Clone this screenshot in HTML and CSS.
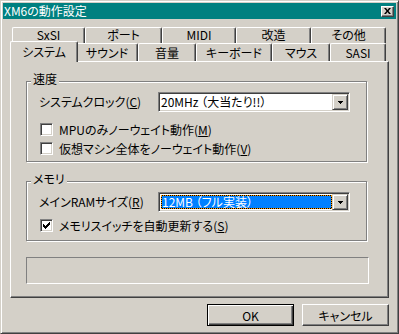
FILE: index.html
```html
<!DOCTYPE html>
<html lang="ja">
<head>
  <meta charset="UTF-8" />
  <title>XM6の動作設定</title>
  <link rel="stylesheet" href="styles.css">
</head>
<body>
  <div class="window">
    <div class="titlebar">
      <span class="title">XM6の動作設定</span>
      <span class="close-btn">
        <svg width="7" height="6" viewBox="0 0 7 6"><path d="M0 0h2l1.5 2L5 0h2L4.5 3 7 6H5L3.5 4 2 6H0l2.5-3z" fill="#000"/></svg>
      </span>
    </div>

    <div class="client">
      <div class="tab-row back">
        <div class="tab">SxSI</div>
        <div class="tab">ポート</div>
        <div class="tab">MIDI</div>
        <div class="tab">改造</div>
        <div class="tab">その他</div>
      </div>
      <div class="tab-row front">
        <div class="tab selected">システム</div>
        <div class="tab">サウンド</div>
        <div class="tab">音量</div>
        <div class="tab">キーボード</div>
        <div class="tab">マウス</div>
        <div class="tab">SASI</div>
      </div>

      <div class="panel">
        <div class="group group-speed">
          <div class="group-title">速度</div>
          <div class="field-row">
            <span class="field-label">システムクロック(<u>C</u>)</span>
            <div class="combo">
              <span class="combo-value">20MHz （大当たり!!）</span>
              <span class="combo-btn">
                <svg width="5" height="3" viewBox="0 0 5 3" shape-rendering="crispEdges"><path d="M0 0h5v1H0zM1 1h3v1H1zM2 2h1v1H2z" fill="#000"/></svg>
              </span>
            </div>
          </div>
          <div class="check-row first">
            <span class="checkbox"></span>
            <span>MPUのみノーウェイト動作(<u>M</u>)</span>
          </div>
          <div class="check-row second">
            <span class="checkbox"></span>
            <span>仮想マシン全体をノーウェイト動作(<u>V</u>)</span>
          </div>
        </div>

        <div class="group group-memory">
          <div class="group-title">メモリ</div>
          <div class="field-row">
            <span class="field-label">メインRAMサイズ(<u>R</u>)</span>
            <div class="combo">
              <span class="combo-value selected">12MB （フル実装）</span>
              <span class="combo-btn">
                <svg width="5" height="3" viewBox="0 0 5 3" shape-rendering="crispEdges"><path d="M0 0h5v1H0zM1 1h3v1H1zM2 2h1v1H2z" fill="#000"/></svg>
              </span>
            </div>
          </div>
          <div class="check-row memory">
            <span class="checkbox">
              <svg width="7" height="7" viewBox="0 0 7 7" shape-rendering="crispEdges"><path d="M6 0h1v3H6zM5 1h1v3H5zM4 2h1v3H4zM3 3h1v3H3zM2 4h1v3H2zM1 3h1v3H1zM0 2h1v3H0z" fill="#000"/></svg>
            </span>
            <span>メモリスイッチを自動更新する(<u>S</u>)</span>
          </div>
        </div>

        <div class="status-box"></div>
      </div>

      <div class="buttons">
        <button class="btn default">OK</button>
        <button class="btn">キャンセル</button>
      </div>
    </div>
  </div>
</body>
</html>
```

FILE: styles.css
```css
body {
  margin: 0;
  background: #d4d0c8;
  font-family: "Noto Sans CJK JP", sans-serif;
  font-size: 12px;
  font-feature-settings: "palt";
  color: #000;
}
.window {
  width: 399px;
  height: 334px;
  box-sizing: border-box;
  border: 1px solid;
  border-color: #d4d0c8 #404040 #404040 #d4d0c8;
  box-shadow: inset 1px 1px #fff, inset -1px -1px #808080;
  padding: 2px;
}
.titlebar {
  height: 16px;
  background: #008080;
  color: #fff;
  display: flex;
  align-items: center;
  justify-content: space-between;
  padding: 0 2px 0 1px;
  line-height: 16px;
}
.close-btn {
  width: 13px;
  height: 11px;
  box-sizing: border-box;
  background: #d4d0c8;
  border: 1px solid;
  border-color: #fff #404040 #404040 #fff;
  box-shadow: inset -1px -1px #808080;
  display: flex;
  align-items: center;
  justify-content: center;
}
.client {
  padding: 8px 7px 0 7px;
}
.tab-row {
  display: flex;
  padding-left: 2px;
}
.tab-row.back {
  height: 16px;
}
.tab-row.front {
  height: 18px;
}
.tab {
  box-sizing: border-box;
  height: 100%;
  background: #d4d0c8;
  border-top: 1px solid #fff;
  border-left: 1px solid #fff;
  border-right: 1px solid #404040;
  border-radius: 2px 2px 0 0;
  box-shadow: inset -1px 0 #808080;
  text-align: center;
}
.back .tab {
  line-height: 13px;
}
.front .tab {
  line-height: 17px;
}
.back .tab:nth-child(1) { width: 73px; }
.back .tab:nth-child(2) { width: 77px; }
.back .tab:nth-child(3) { width: 74px; }
.back .tab:nth-child(4) { width: 75px; }
.back .tab:nth-child(5) { width: 75px; }
.front .tab:nth-child(1) { width: 64px; }
.front .tab:nth-child(2) { width: 62px; }
.front .tab:nth-child(3) { width: 58px; }
.front .tab:nth-child(4) { width: 76px; }
.front .tab:nth-child(5) { width: 58px; }
.front .tab:nth-child(6) { width: 56px; }
.front .tab.selected {
  width: 68px;
  height: 21px;
  margin: -2px -2px 0 -2px;
  line-height: 20px;
  position: relative;
  z-index: 1;
}
.panel {
  box-sizing: border-box;
  height: 237px;
  border: 1px solid;
  border-color: #fff #404040 #404040 #fff;
  box-shadow: inset -1px -1px #808080;
  padding: 19px 0 0 15px;
}
.group {
  width: 341px;
  box-sizing: border-box;
  border: 1px solid #808080;
  box-shadow: inset 1px 1px #fff, 1px 1px #fff;
  padding: 0 0 0 12px;
}
.group-speed {
  height: 81px;
}
.group-memory {
  height: 60px;
  margin-top: 19px;
}
.group-title {
  width: fit-content;
  height: 14px;
  line-height: 14px;
  margin: -10px 0 0 -8px;
  padding: 0 2px;
  background: #d4d0c8;
}
.field-row {
  display: flex;
  align-items: center;
  height: 20px;
  margin-top: 6px;
}
.field-label {
  width: 119px;
  line-height: 16px;
}
.combo {
  display: flex;
  width: 192px;
  height: 20px;
  box-sizing: border-box;
  border: 1px solid;
  border-color: #808080 #fff #fff #808080;
  box-shadow: inset 1px 1px #404040, inset -1px -1px #d4d0c8;
  background: #fff;
  padding: 1px;
}
.combo-value {
  flex: 1;
  line-height: 16px;
  padding-left: 1px;
  white-space: nowrap;
}
.combo-value.selected {
  margin: 1px 0 1px 1px;
  padding-left: 0;
  line-height: 12px;
  color: #fff;
  border: 1px dotted #ff9a00;
  background: linear-gradient(#0080ff, #0080ff) padding-box, #000;
}
.combo-btn {
  width: 16px;
  height: 16px;
  box-sizing: border-box;
  background: #d4d0c8;
  border: 1px solid;
  border-color: #d4d0c8 #404040 #404040 #d4d0c8;
  box-shadow: inset 1px 1px #fff, inset -1px -1px #808080;
  display: flex;
  align-items: center;
  justify-content: center;
}
.check-row {
  display: flex;
  align-items: center;
  height: 13px;
  line-height: 13px;
}
.check-row.first {
  margin-top: 11px;
}
.check-row.second {
  margin-top: 6px;
}
.check-row.memory {
  margin-top: 7px;
}
.checkbox {
  width: 13px;
  height: 13px;
  box-sizing: border-box;
  border: 1px solid;
  border-color: #808080 #fff #fff #808080;
  box-shadow: inset 1px 1px #404040, inset -1px -1px #d4d0c8;
  background: #fff;
  margin: 0 6px 0 1px;
  display: flex;
  align-items: center;
  justify-content: center;
}
.status-box {
  width: 343px;
  height: 27px;
  box-sizing: border-box;
  margin-top: 16px;
  border: 1px solid;
  border-color: #808080 #fff #fff #808080;
}
.buttons {
  display: flex;
  justify-content: flex-end;
  gap: 8px;
  margin-top: 6px;
}
.btn {
  width: 87px;
  height: 22px;
  box-sizing: border-box;
  padding: 0;
  font: inherit;
  color: #000;
  background: #d4d0c8;
  border: 1px solid;
  border-color: #fff #404040 #404040 #fff;
  box-shadow: inset -1px -1px #808080;
}
.btn.default {
  border-color: #000;
  box-shadow: inset 1px 1px #fff, inset -1px -1px #404040, inset -2px -2px #808080;
}
```
